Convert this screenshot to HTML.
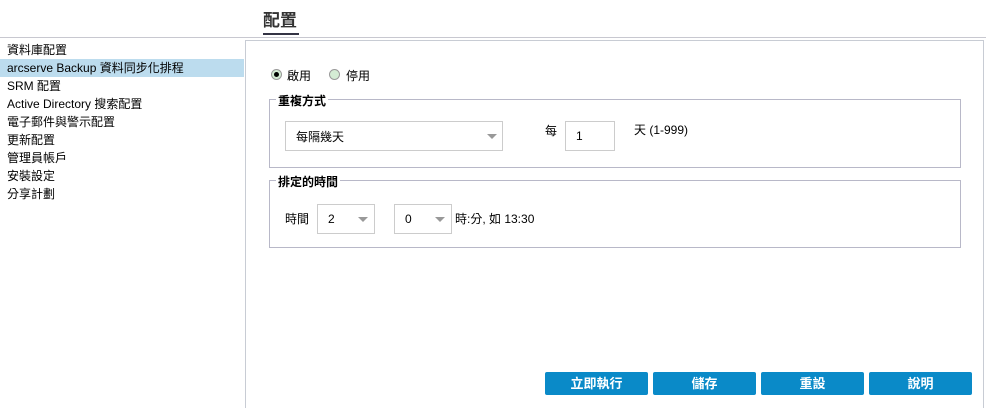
<!DOCTYPE html>
<html><head><meta charset="utf-8"><style>
*{box-sizing:border-box;margin:0;padding:0}
body{width:986px;height:408px;background:#fff;font-family:"Liberation Sans","Noto Sans CJK TC",sans-serif;font-size:12px;color:#000;position:relative;overflow:hidden}
.a{position:absolute}
.title{left:263px;top:6px;font-size:17px;font-weight:bold;color:#333}
.ul{left:263px;top:33px;width:36px;height:2px;background:#333344}
.hl{left:0;top:37px;width:986px;height:1px;background:#c8c8d0}
.nav{left:0;top:41px;width:244px}
.nav div{height:18px;line-height:18px;padding-left:7px;font-size:12px;white-space:nowrap}
.nav .sel{background:#bcdcee}
.panel{left:245px;top:40px;width:739px;height:368px;border:1px solid #c8ccd4;border-bottom:none}
.fs{border:1px solid #b8b8c8;}
.lg{background:#fff;font-weight:bold;padding:0 2px}
.box{border:1px solid #ccc;background:#fff}
.arr{width:0;height:0;border-left:5px solid transparent;border-right:5px solid transparent;border-top:5px solid #999}
.rad{width:11px;height:11px;border-radius:50%;border:1px solid #999;background:#d4ecd4}
.btn{top:372px;width:103px;height:23px;background:#0a8ac8;color:#fff;font-weight:bold;font-size:13px;text-align:center;line-height:23px;border-radius:2px}
</style></head><body>
<div class="a title">配置</div>
<div class="a ul"></div>
<div class="a hl"></div>
<div class="a nav">
<div>資料庫配置</div>
<div class="sel">arcserve Backup 資料同步化排程</div>
<div>SRM 配置</div>
<div>Active Directory 搜索配置</div>
<div>電子郵件與警示配置</div>
<div>更新配置</div>
<div>管理員帳戶</div>
<div>安裝設定</div>
<div>分享計劃</div>
</div>
<div class="a panel"></div>
<div class="a rad" style="left:271px;top:69px"><div style="width:5px;height:5px;background:#000;border-radius:50%;margin:2px"></div></div>
<div class="a" style="left:287px;top:67px">啟用</div>
<div class="a rad" style="left:329px;top:69px"></div>
<div class="a" style="left:346px;top:67px">停用</div>

<div class="a fs" style="left:269px;top:99px;width:692px;height:69px"></div>
<div class="a lg" style="left:276px;top:92px">重複方式</div>
<div class="a box" style="left:285px;top:121px;width:218px;height:30px"></div>
<div class="a" style="left:296px;top:128px">每隔幾天</div>
<div class="a arr" style="left:487px;top:134px"></div>
<div class="a" style="left:545px;top:122px">每</div>
<div class="a box" style="left:565px;top:121px;width:50px;height:30px"></div>
<div class="a" style="left:576px;top:129px">1</div>
<div class="a" style="left:634px;top:121px">天 (1-999)</div>

<div class="a fs" style="left:269px;top:180px;width:692px;height:68px"></div>
<div class="a lg" style="left:276px;top:173px">排定的時間</div>
<div class="a" style="left:285px;top:210px">時間</div>
<div class="a box" style="left:317px;top:204px;width:58px;height:30px"></div>
<div class="a" style="left:328px;top:212px">2</div>
<div class="a arr" style="left:358px;top:217px"></div>
<div class="a box" style="left:394px;top:204px;width:58px;height:30px"></div>
<div class="a" style="left:405px;top:212px">0</div>
<div class="a arr" style="left:435px;top:217px"></div>
<div class="a" style="left:455px;top:210px">時:分, 如 13:30</div>

<div class="a btn" style="left:545px">立即執行</div>
<div class="a btn" style="left:653px">儲存</div>
<div class="a btn" style="left:761px">重設</div>
<div class="a btn" style="left:869px">說明</div>
</body></html>
